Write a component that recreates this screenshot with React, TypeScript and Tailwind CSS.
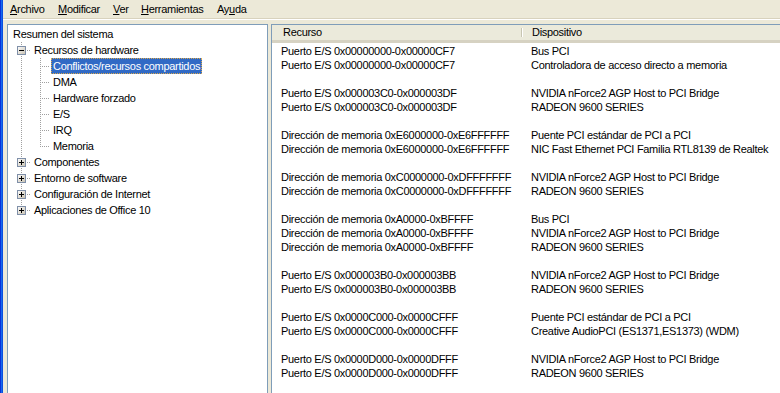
import type { ReactNode } from "react";

type TreeItem = {
  label: string;
  level: 0 | 1 | 2;
  box?: "plus" | "minus";
  last?: boolean;
  selected?: boolean;
};

const tree: TreeItem[] = [
  { label: "Resumen del sistema", level: 0 },
  { label: "Recursos de hardware", level: 1, box: "minus" },
  { label: "Conflictos/recursos compartidos", level: 2, selected: true },
  { label: "DMA", level: 2 },
  { label: "Hardware forzado", level: 2 },
  { label: "E/S", level: 2 },
  { label: "IRQ", level: 2 },
  { label: "Memoria", level: 2, last: true },
  { label: "Componentes", level: 1, box: "plus" },
  { label: "Entorno de software", level: 1, box: "plus" },
  { label: "Configuración de Internet", level: 1, box: "plus" },
  { label: "Aplicaciones de Office 10", level: 1, box: "plus", last: true },
];

const PCI_BRIDGE = "NVIDIA nForce2 AGP Host to PCI Bridge";
const RADEON = "RADEON 9600 SERIES";

// null = fila vacía entre grupos
const rows: ([string, string] | null)[] = [
  ["Puerto E/S 0x00000000-0x00000CF7", "Bus PCI"],
  ["Puerto E/S 0x00000000-0x00000CF7", "Controladora de acceso directo a memoria"],
  null,
  ["Puerto E/S 0x000003C0-0x000003DF", PCI_BRIDGE],
  ["Puerto E/S 0x000003C0-0x000003DF", RADEON],
  null,
  ["Dirección de memoria 0xE6000000-0xE6FFFFFF", "Puente PCI estándar de PCI a PCI"],
  ["Dirección de memoria 0xE6000000-0xE6FFFFFF", "NIC Fast Ethernet PCI Familia RTL8139 de Realtek"],
  null,
  ["Dirección de memoria 0xC0000000-0xDFFFFFFF", PCI_BRIDGE],
  ["Dirección de memoria 0xC0000000-0xDFFFFFFF", RADEON],
  null,
  ["Dirección de memoria 0xA0000-0xBFFFF", "Bus PCI"],
  ["Dirección de memoria 0xA0000-0xBFFFF", PCI_BRIDGE],
  ["Dirección de memoria 0xA0000-0xBFFFF", RADEON],
  null,
  ["Puerto E/S 0x000003B0-0x000003BB", PCI_BRIDGE],
  ["Puerto E/S 0x000003B0-0x000003BB", RADEON],
  null,
  ["Puerto E/S 0x0000C000-0x0000CFFF", "Puente PCI estándar de PCI a PCI"],
  ["Puerto E/S 0x0000C000-0x0000CFFF", "Creative AudioPCI (ES1371,ES1373) (WDM)"],
  null,
  ["Puerto E/S 0x0000D000-0x0000DFFF", PCI_BRIDGE],
  ["Puerto E/S 0x0000D000-0x0000DFFF", RADEON],
  null,
];

// dotted line, one pixel on / one off
function dots(x1: number, y1: number, x2: number, y2: number) {
  const out: ReactNode[] = [];
  for (let x = x1; x <= x2; x += 2)
    for (let y = y1; y <= y2; y += 2) out.push(<rect key={`${x}-${y}`} x={x} y={y} width={1} height={1} />);
  return out;
}

function IndentCell({ mode, box }: { mode: "line" | "branch" | "lastBranch"; box?: "plus" | "minus" }) {
  return (
    <svg width={19} height={16} className="shrink-0" shapeRendering="crispEdges">
      <g fill="#A0A0A0">
        {dots(9, 0, 9, mode === "lastBranch" ? 8 : 15)}
        {mode !== "line" && dots(11, 8, 18, 8)}
      </g>
      {box && (
        <g>
          <defs>
            <linearGradient id="bx" x1="0" y1="0" x2="1" y2="1">
              <stop offset="0" stopColor="#FFFFFF" />
              <stop offset="1" stopColor="#C6BFAE" />
            </linearGradient>
          </defs>
          <rect x={5.5} y={4.5} width={8} height={8} fill="url(#bx)" stroke="#7F8FA8" />
          <rect x={7} y={8} width={5} height={1} fill="#000" />
          {box === "plus" && <rect x={9} y={6} width={1} height={5} fill="#000" />}
        </g>
      )}
    </svg>
  );
}

function TreeRow({ item }: { item: TreeItem }) {
  return (
    <div className="flex h-4 items-center">
      {item.level === 0 ? (
        <div className="w-[5px] shrink-0" />
      ) : (
        <>
          <div className="w-[4px] shrink-0" />
          {item.level === 1 && <IndentCell mode={item.last ? "lastBranch" : "branch"} box={item.box} />}
          {item.level === 2 && (
            <>
              <IndentCell mode="line" />
              <IndentCell mode={item.last ? "lastBranch" : "branch"} />
            </>
          )}
        </>
      )}
      <span
        className={
          item.selected
            ? "ml-[1px] px-[2px] leading-4 bg-[#316AC5] text-white outline outline-1 outline-dotted -outline-offset-1 outline-[#D9A84E]"
            : item.level === 0
              ? "leading-4"
              : "ml-[1px] px-[2px] leading-4"
        }
      >
        {item.label}
      </span>
    </div>
  );
}

function MenuItem({ before, hot, after, w }: { before: string; hot: string; after: string; w: string }) {
  return (
    <span className={`${w} shrink-0 whitespace-nowrap`}>
      {before}
      <span className="underline underline-offset-[1px]">{hot}</span>
      {after}
    </span>
  );
}

export default function App() {
  return (
    <div
      className="flex h-[393px] w-[780px] overflow-hidden bg-[#ECE9D8] text-[11px] tracking-[-0.3px] text-black"
      style={{ fontFamily: '"Liberation Sans", Arial, sans-serif' }}
    >
      {/* window frame */}
      <div className="w-px shrink-0 bg-[#0831D9]" />
      <div className="w-px shrink-0 bg-[#166AEE]" />
      <div className="w-px shrink-0 bg-[#0B4FE0]" />

      <div className="flex min-w-0 flex-1 flex-col">
        {/* menu bar */}
        <div className="flex h-[18px] shrink-0 items-center pl-[7px] leading-none">
          <MenuItem before="" hot="A" after="rchivo" w="w-[48px]" />
          <MenuItem before="" hot="M" after="odificar" w="w-[55px]" />
          <MenuItem before="" hot="V" after="er" w="w-[28px]" />
          <MenuItem before="" hot="H" after="erramientas" w="w-[76px]" />
          <MenuItem before="Ay" hot="u" after="da" w="w-[40px]" />
        </div>
        <div className="h-px shrink-0 bg-[#D8D2BD]" />
        <div className="h-px shrink-0 bg-white" />
        <div className="h-[4px] shrink-0" />

        <div className="flex min-h-0 flex-1">
          <div className="w-[4px] shrink-0" />

          {/* tree pane */}
          <div className="w-[261px] shrink-0 border-l border-t border-r border-[#7F9DB9] bg-white pt-px">
            {tree.map((t) => (
              <TreeRow key={t.label} item={t} />
            ))}
          </div>

          <div className="w-[3px] shrink-0" />

          {/* list pane */}
          <div className="flex min-w-0 flex-1 flex-col border-l border-t border-[#7F9DB9] bg-white">
            <div className="flex h-[18px] shrink-0 border-b-[3px] border-[#D6D2C2] bg-[#EBEADB]">
              <div className="flex w-[249px] shrink-0 items-center pl-[11px]">Recurso</div>
              <div className="my-[3px] w-px shrink-0 bg-[#C7C5B2]" />
              <div className="my-[3px] w-px shrink-0 bg-white" />
              <div className="flex flex-1 items-center pl-[9px]">Dispositivo</div>
            </div>
            <div className="pt-px">
              {rows.map((r, i) => (
                <div key={i} className="flex h-[14px] items-center whitespace-nowrap leading-[14px]">
                  <div className="w-[251px] shrink-0 overflow-hidden pl-[9px]">{r ? r[0] : ""}</div>
                  <div className="min-w-0 flex-1 overflow-hidden pl-[8px]">{r ? r[1] : ""}</div>
                </div>
              ))}
            </div>
          </div>
        </div>
      </div>
    </div>
  );
}
